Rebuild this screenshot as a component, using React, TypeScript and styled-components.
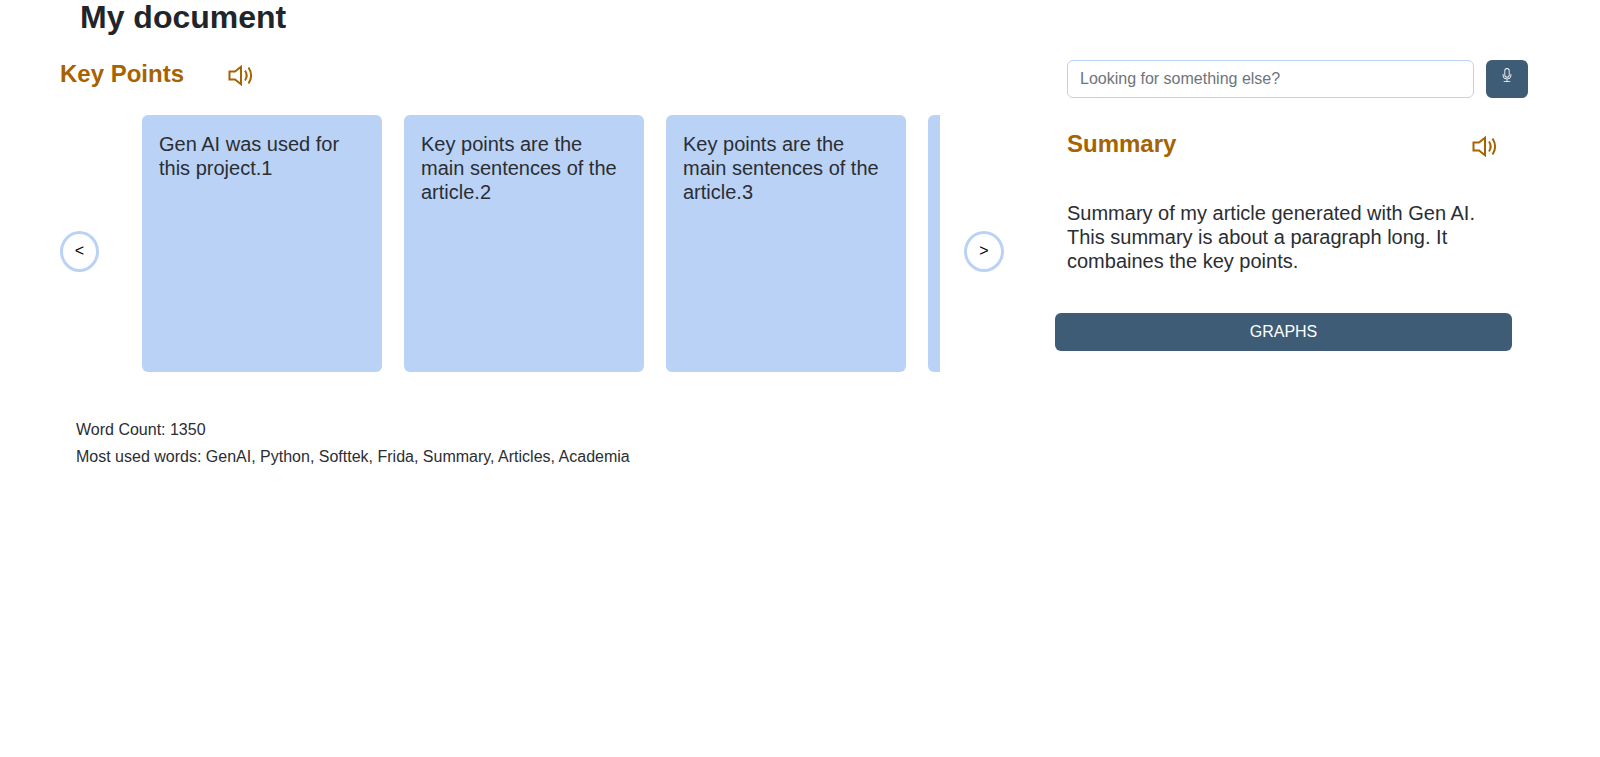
import styled, { createGlobalStyle } from "styled-components";
import { BsMic } from "react-icons/bs";

const GlobalStyle = createGlobalStyle`
  body {
    margin: 0;
    background: #fff;
    color: #212529;
    font-family: "Liberation Sans", Arial, sans-serif;
  }
`;

const Page = styled.div`
  width: 1600px;
  height: 757px;
  overflow: hidden;
`;
const DocTitle = styled.h1`
  margin: 0 0 0 80px;
  font-size: 32px;
  line-height: 34px;
  font-weight: bold;
`;
const Columns = styled.div`
  display: flex;
  margin-top: 24px;
`;
const LeftCol = styled.section`
  width: 1067px;
  flex-shrink: 0;
`;
const RightCol = styled.section`
  width: 533px;
  padding-top: 2px;
`;
const KeyHeader = styled.div`
  display: flex;
  align-items: center;
  padding-left: 60px;
  height: 32px;
`;
const Heading = styled.h2`
  margin: -2px 0 0;
  font-size: 24px;
  line-height: 29px;
  font-weight: bold;
  color: #a66300;
`;
const Speaker = styled.button<{ $gap: number; $top: number }>`
  margin: ${(p) => p.$top}px 0 0 ${(p) => p.$gap}px;
  padding: 0;
  border: 0;
  background: none;
  display: flex;
  color: #a66300;
`;
const Carousel = styled.div`
  display: flex;
  align-items: center;
  margin-top: 25px;
  padding-left: 60px;
`;
const Arrow = styled.button<{ $width: number }>`
  width: ${(p) => p.$width}px;
  height: 41px;
  flex-shrink: 0;
  margin-top: 15px;
  padding: 0;
  border: 3px solid #bad2f6;
  border-radius: 50%;
  background: #fff;
  color: #000;
  font-family: "Liberation Sans", Arial, sans-serif;
  font-size: 16px;
`;
const Viewport = styled.div`
  display: flex;
  gap: 22px;
  width: 798px;
  margin: 0 24px 0 43px;
  overflow: hidden;
`;
const Card = styled.article`
  width: 240px;
  height: 257px;
  flex-shrink: 0;
  box-sizing: border-box;
  padding: 17px;
  border-radius: 6px;
  background: #bad2f6;
  color: #2a2e33;
  font-size: 20px;
  line-height: 24px;
`;
const Stats = styled.div`
  margin: 48px 0 0 76px;
  color: #2a2e33;
  font-size: 16px;
`;
const StatLine = styled.p`
  margin: 0 0 8px;
  line-height: 19px;
`;
const SearchRow = styled.form`
  display: flex;
  gap: 12px;
`;
const SearchInput = styled.input`
  width: 407px;
  height: 38px;
  box-sizing: border-box;
  padding: 6px 12px;
  border: 1px solid #bad2f6;
  border-radius: 6px;
  font-family: "Liberation Sans", Arial, sans-serif;
  font-size: 16px;
  &::placeholder {
    color: #6c757d;
  }
`;
const MicButton = styled.button`
  width: 42px;
  height: 38px;
  padding: 0 0 6px;
  border: 0;
  border-radius: 6px;
  background: #3e5c76;
  color: #fff;
  font-size: 14px;
`;
const SummaryHeader = styled.div`
  display: flex;
  align-items: center;
  justify-content: space-between;
  width: 430px;
  margin-top: 30px;
  height: 32px;
`;
const SummaryText = styled.p`
  width: 410px;
  margin: 41px 0 0;
  color: #2a2e33;
  font-size: 20px;
  line-height: 24px;
`;
const GraphsButton = styled.button`
  display: block;
  width: 457px;
  height: 38px;
  margin: 40px 0 0 -12px;
  border: 0;
  border-radius: 6px;
  background: #3e5c76;
  color: #fff;
  font-family: "Liberation Sans", Arial, sans-serif;
  font-size: 16px;
`;

const keyPoints = [
  "Gen AI was used for this project.1",
  "Key points are the main sentences of the article.2",
  "Key points are the main sentences of the article.3",
  "Key points are the main sentences of the article.4",
];

function SpeakerIcon() {
  return (
    <svg width="25" height="21" viewBox="0 0 25 21" fill="none" stroke="currentColor" strokeWidth="2">
      <path d="M1.5 6.5H7L13 1.8V19.2L7 14.5H1.5Z" strokeLinejoin="miter" />
      <path d="M17 5.5C19 8.5 19 12.5 17 15.5" />
      <path d="M20.5 2.5C23.8 7.5 23.8 13.5 20.5 18.5" />
    </svg>
  );
}

export default function App() {
  return (
    <Page>
      <GlobalStyle />
      <DocTitle>My document</DocTitle>
      <Columns>
        <LeftCol>
          <KeyHeader>
            <Heading>Key Points</Heading>
            <Speaker $gap={44} $top={2} aria-label="Read key points">
              <SpeakerIcon />
            </Speaker>
          </KeyHeader>
          <Carousel>
            <Arrow $width={39}>&lt;</Arrow>
            <Viewport>
              {keyPoints.map((point) => (
                <Card key={point}>{point}</Card>
              ))}
            </Viewport>
            <Arrow $width={40}>&gt;</Arrow>
          </Carousel>
          <Stats>
            <StatLine>Word Count: 1350</StatLine>
            <StatLine>Most used words: GenAI, Python, Softtek, Frida, Summary, Articles, Academia</StatLine>
          </Stats>
        </LeftCol>
        <RightCol>
          <SearchRow>
            <SearchInput placeholder="Looking for something else?" />
            <MicButton type="button" aria-label="Voice search">
              <BsMic />
            </MicButton>
          </SearchRow>
          <SummaryHeader>
            <Heading>Summary</Heading>
            <Speaker $gap={0} $top={4} aria-label="Read summary">
              <SpeakerIcon />
            </Speaker>
          </SummaryHeader>
          <SummaryText>
            Summary of my article generated with Gen AI. This summary is about a paragraph long. It combaines the key points.
          </SummaryText>
          <GraphsButton type="button">GRAPHS</GraphsButton>
        </RightCol>
      </Columns>
    </Page>
  );
}
